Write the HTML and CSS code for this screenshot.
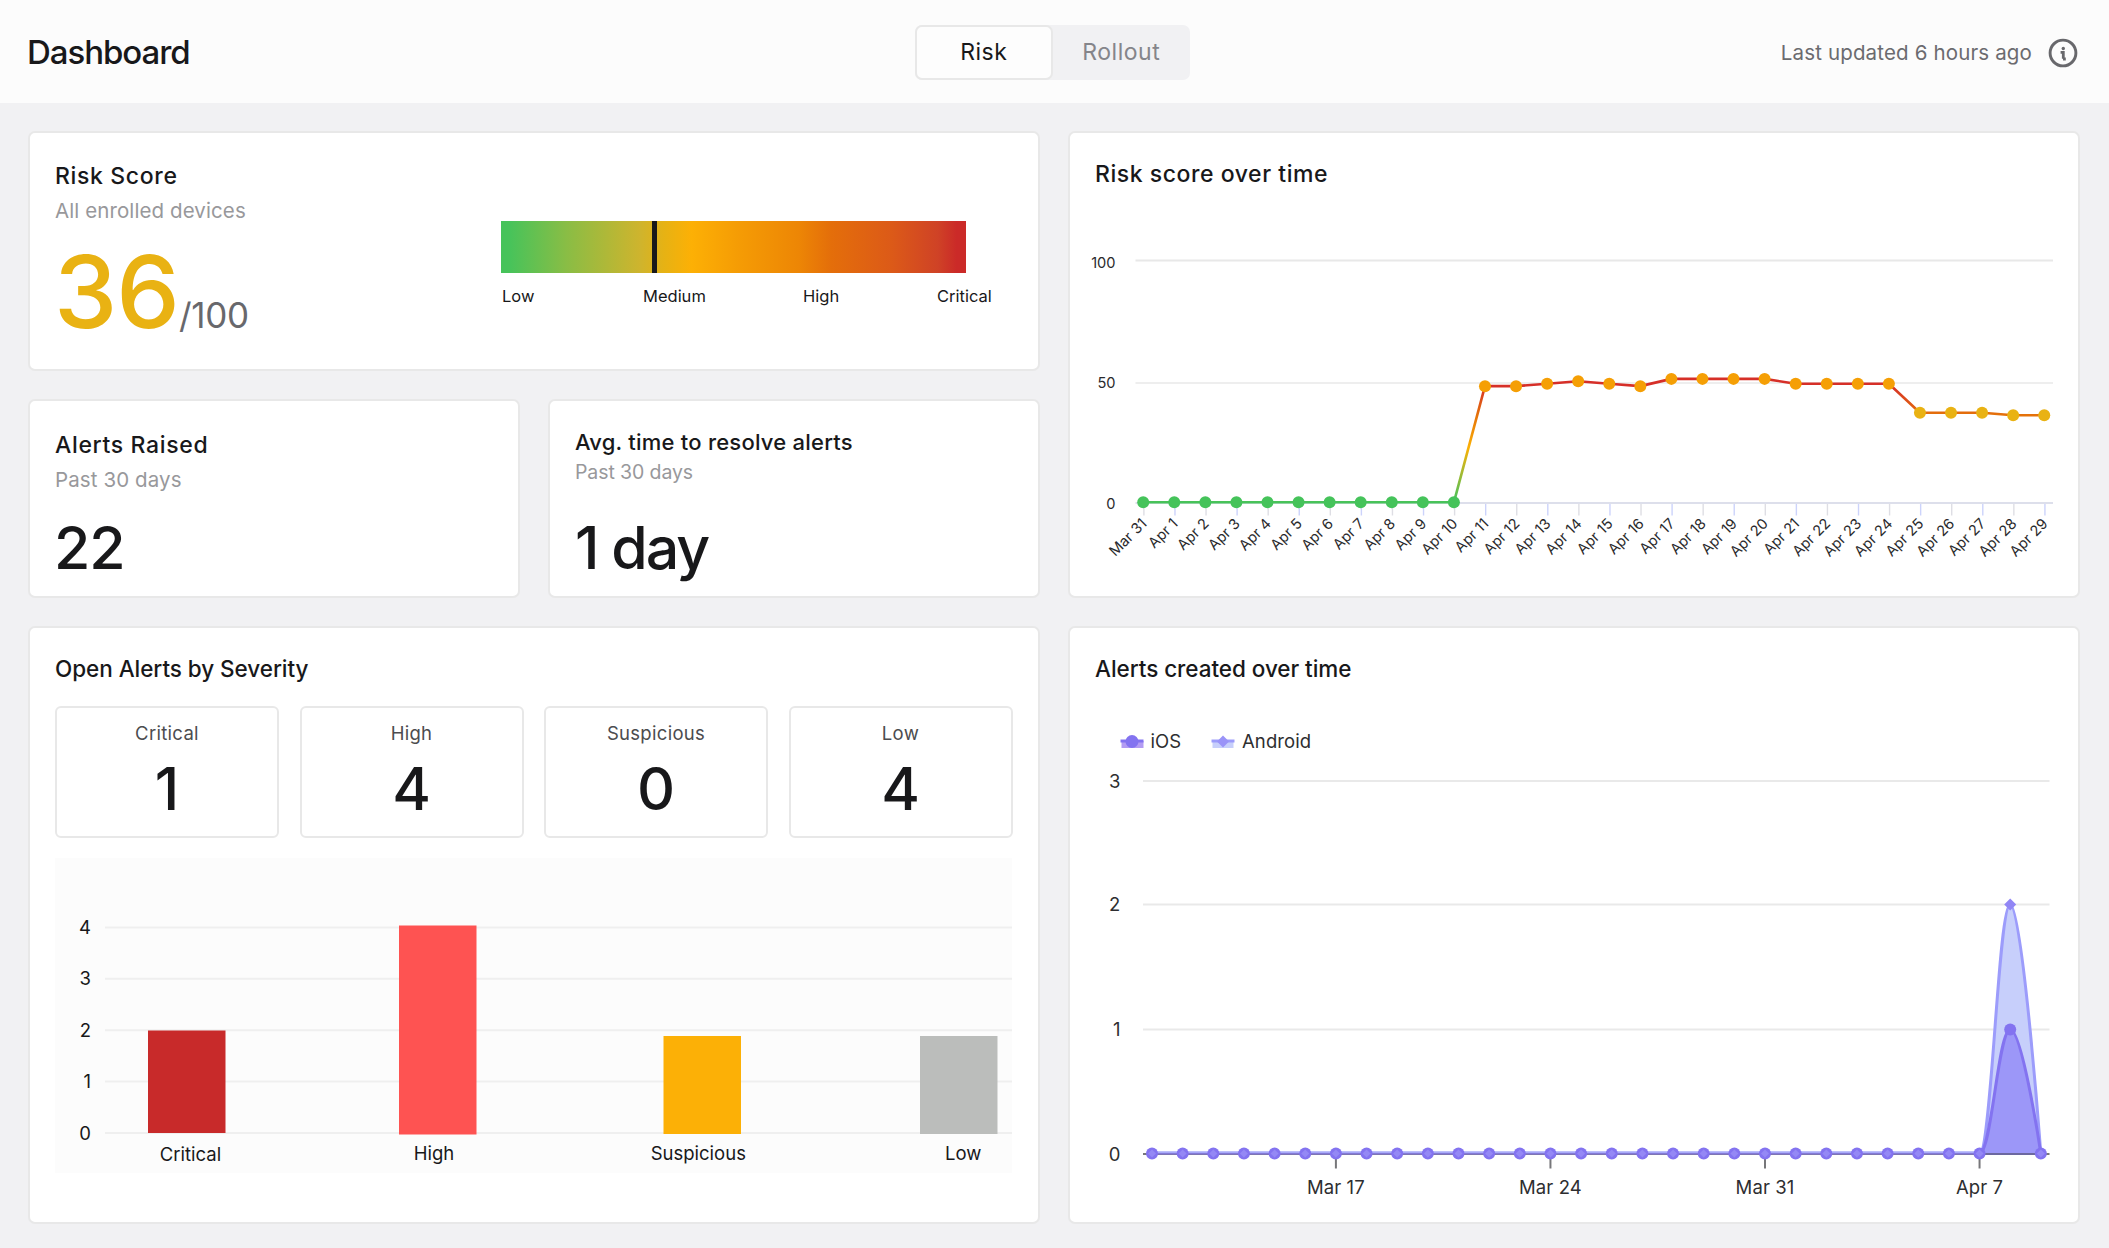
FILE: index.html
```html
<!DOCTYPE html>
<html lang="en">
<head>
    <meta charset="UTF-8">
    <meta name="viewport" content="width=device-width, initial-scale=1.0">
    <title>Dashboard</title>
    <link rel="stylesheet" href="styles.css">
</head>
<body>
    <header class="header">
        <h1 class="page-title">Dashboard</h1>
        <div class="tabs">
            <button class="tab active">Risk</button>
            <button class="tab">Rollout</button>
        </div>
        <div class="updated">
            <span>Last updated 6 hours ago</span>
            <svg class="info-icon" width="30" height="30" viewBox="0 0 30 30">
                <circle cx="15" cy="15" r="12.9" fill="none" stroke="#68686c" stroke-width="2.9"/>
                <circle cx="15.3" cy="10.5" r="1.7" fill="#68686c"/>
                <path d="M12.6 14.4h2.7v6.4M15 21h2.8" fill="none" stroke="#68686c" stroke-width="2.8"/>
            </svg>
        </div>
    </header>

    <main class="dashboard">
        <section class="card score-card">
            <div class="score-info">
                <h2 class="card-title wide">Risk Score</h2>
                <p class="card-sub">All enrolled devices</p>
                <div class="score"><span class="score-value">36</span><span class="score-max">/100</span></div>
            </div>
            <div class="gauge">
                <div class="gauge-bar"><div class="gauge-marker"></div></div>
                <div class="gauge-labels">
                    <span>Low</span>
                    <span>Medium</span>
                    <span>High</span>
                    <span>Critical</span>
                </div>
            </div>
        </section>

        <section class="card risk-time-card">
            <h2 class="card-title">Risk score over time</h2>
            <svg id="riskChart" class="chart" width="1008" height="408"></svg>
        </section>

        <div class="stat-row">
            <section class="card stat-card">
                <h2 class="card-title wide">Alerts Raised</h2>
                <p class="card-sub">Past 30 days</p>
                <div class="stat-value">22</div>
            </section>
            <section class="card stat-card compact">
                <h2 class="card-title">Avg. time to resolve alerts</h2>
                <p class="card-sub">Past 30 days</p>
                <div class="stat-value">1 day</div>
            </section>
        </div>

        <section class="card severity-card">
            <h2 class="card-title">Open Alerts by Severity</h2>
            <div class="severity-list">
                <div class="severity"><span class="severity-name">Critical</span><span class="severity-count">1</span></div>
                <div class="severity"><span class="severity-name">High</span><span class="severity-count">4</span></div>
                <div class="severity"><span class="severity-name">Suspicious</span><span class="severity-count">0</span></div>
                <div class="severity"><span class="severity-name">Low</span><span class="severity-count">4</span></div>
            </div>
            <svg id="severityChart" class="bar-chart" width="957" height="315"></svg>
        </section>

        <section class="card alerts-time-card">
            <h2 class="card-title">Alerts created over time</h2>
            <svg id="alertsChart" class="chart" width="1008" height="536"></svg>
        </section>
    </main>

    <script src="charts.js"></script>
</body>
</html>
```
FILE: styles.css
```css
* {
    box-sizing: border-box;
}

body {
    margin: 0;
    background-color: #f1f1f3;
    color: #18181a;
    font-family: Inter, "Liberation Sans", sans-serif;
    overflow: hidden;
}

h1, h2, p {
    margin: 0;
}

/* Header */
.header {
    display: grid;
    grid-template-columns: 1fr auto 1fr;
    align-items: center;
    height: 103px;
    padding: 0 31px 0 27px;
    background-color: #fcfcfc;
}

.page-title {
    font-size: 33px;
    font-weight: 500;
    letter-spacing: -1.05px;
}

.tabs {
    display: flex;
    height: 55px;
    margin-top: 1px;
    border-radius: 7px;
    background-color: #f1f1f3;
}

.tab {
    width: 137.5px;
    padding: 0;
    border: 2px solid transparent;
    border-radius: 7px;
    background: none;
    color: #85858a;
    font-family: inherit;
    font-size: 23px;
    letter-spacing: 0.5px;
}

.tab.active {
    border-color: #e8e8e8;
    background-color: #fdfdfd;
    color: #18181a;
}

.updated {
    display: flex;
    justify-content: flex-end;
    align-items: center;
    gap: 16px;
    padding-top: 2px;
    color: #6b6b6f;
    font-size: 20.5px;
    letter-spacing: 0.15px;
}

/* Cards */
.dashboard {
    display: grid;
    grid-template-columns: 1012px 1012px;
    grid-template-rows: 240px 199px 598px;
    gap: 28px;
    padding: 28px 0 0 28px;
}

.card {
    padding: 25.5px 25px 0;
    border: 2px solid #e8e8e8;
    border-radius: 7px;
    background-color: #fff;
}

.card-title {
    font-size: 22.5px;
    font-weight: 500;
    line-height: 30px;
    letter-spacing: -0.05px;
}

.card-title.wide {
    font-size: 23px;
    letter-spacing: 0.65px;
}

.card-sub {
    margin-top: 6px;
    color: #98989b;
    font-size: 20.5px;
    line-height: 28px;
    letter-spacing: 0.1px;
}

/* Risk score */
.score-card {
    display: grid;
    grid-template-columns: 446px 1fr;
    padding-top: 27.5px;
}

.score {
    margin-top: 16.5px;
    margin-left: -1px;
    line-height: 100px;
    white-space: nowrap;
}

.score-value {
    color: #e9b213;
    font-size: 101px;
    font-weight: 500;
    letter-spacing: -1px;
}

.score-max {
    color: #68686c;
    font-size: 35px;
    font-weight: 400;
    letter-spacing: -0.3px;
}

.gauge {
    padding-top: 60.5px;
}

.gauge-bar {
    width: 465px;
    height: 52px;
    padding-left: 151px;
    background: linear-gradient(to right, #45c35a 0%, #48c35a 2%, #89bd45 14%, #cfb42d 30%, #e6b214 35%, #fdb005 41%, #f59c05 51%, #ed8605 64%, #e46e0a 71%, #dc5a18 84%, #cf4226 94%, #cb2a28 98%);
}

.gauge-marker {
    width: 5px;
    height: 52px;
    background-color: #18181a;
}

.gauge-labels {
    display: grid;
    grid-template-columns: 141px 160px 134px auto;
    margin-top: 12.5px;
    padding-left: 1px;
    font-size: 16.5px;
    line-height: 20px;
}

/* Stats */
.risk-time-card {
    grid-column: 2;
    grid-row: 1 / 3;
}

.risk-time-card .card-title {
    font-size: 23px;
    letter-spacing: 0.55px;
}

.stat-row {
    display: grid;
    grid-template-columns: 1fr 1fr;
    gap: 28px;
}

.stat-card {
    padding-top: 28.5px;
}

.stat-value {
    margin-top: 24.5px;
    margin-left: -1px;
    font-size: 59px;
    font-weight: 500;
    line-height: 60px;
    letter-spacing: -1px;
}

.stat-card.compact {
    padding-top: 25.5px;
}

.compact .card-title {
    font-size: 22px;
    letter-spacing: 0.22px;
}

.compact .card-sub {
    margin-top: 1px;
    font-size: 19.5px;
    letter-spacing: -0.1px;
}

.compact .stat-value {
    margin-top: 32px;
    margin-left: 0;
    letter-spacing: -2px;
}

/* Severity */
.severity-list {
    display: grid;
    grid-template-columns: repeat(4, 224px);
    gap: 20.5px;
    margin-top: 22px;
}

.severity {
    display: flex;
    flex-direction: column;
    align-items: center;
    height: 132px;
    padding-top: 13px;
    border: 2px solid #e8e8e8;
    border-radius: 6px;
}

.severity-name {
    color: #4c4c4f;
    font-size: 18.5px;
    line-height: 24px;
    letter-spacing: 0.3px;
}

.severity-count {
    margin-top: 14.5px;
    font-size: 59px;
    font-weight: 500;
    line-height: 60px;
}

/* Charts */
.chart {
    display: block;
    margin: 0 -25px;
}

.bar-chart {
    display: block;
    margin-top: 20px;
    background-color: #fcfcfc;
}

svg text {
    fill: #18181a;
    font-size: 18.5px;
}

#riskChart text {
    font-size: 14.6px;
    fill: #2a2a2c;
}

#alertsChart text {
    fill: #2e2e30;
    letter-spacing: 0.1px;
}
```
FILE: charts.js
```javascript
function add(svg, tag, attrs, text) {
    const el = document.createElementNS('http://www.w3.org/2000/svg', tag);
    for (const key in attrs) el.setAttribute(key, attrs[key]);
    if (text !== undefined) el.textContent = text;
    svg.appendChild(el);
    return el;
}

function gridLine(svg, x1, x2, y, color, width) {
    add(svg, 'line', { x1, x2, y1: y, y2: y, stroke: color, 'stroke-width': width });
}

// Risk score over time
function drawRisk() {
    const svg = document.getElementById('riskChart');
    const values = [0, 0, 0, 0, 0, 0, 0, 0, 0, 0, 0, 48, 48, 49, 50, 49, 48, 51, 51, 51, 51, 49, 49, 49, 49, 37, 37, 37, 36, 36];
    const x = i => 73.2 + i * 31.07;
    const y = v => 313.3 - v * 2.42;

    const grad = add(svg, 'linearGradient', { id: 'riskLine', gradientUnits: 'userSpaceOnUse', x1: 0, x2: 0, y1: 314, y2: 191 });
    [[0, '#45c35a'], [0.08, '#5fc052'], [0.45, '#fbb106'], [0.72, '#e4700a'], [0.95, '#d62f28']].forEach(s => {
        add(grad, 'stop', { offset: s[0], 'stop-color': s[1] });
    });

    gridLine(svg, 65.5, 983, 71.5, '#e8e8e8', 2);
    gridLine(svg, 65.5, 983, 194, '#e8e8e8', 1.5);
    gridLine(svg, 65.5, 983, 314, '#d2d4e4', 1.6);
    add(svg, 'text', { x: 45.5, y: 78.8, 'text-anchor': 'end' }, '100');
    add(svg, 'text', { x: 45.5, y: 198.8, 'text-anchor': 'end' }, '50');
    add(svg, 'text', { x: 45.5, y: 320, 'text-anchor': 'end' }, '0');

    values.forEach((v, i) => {
        add(svg, 'line', { x1: x(i) + 0.7, x2: x(i) + 0.7, y1: 315, y2: 326.5, stroke: i % 2 ? '#ccd3fb' : '#dedee4', 'stroke-width': 1.4 });
        const tx = x(i) + 4.5;
        add(svg, 'text', { x: tx, y: 335.5, 'text-anchor': 'end', transform: `rotate(-45 ${tx} 335.5)` }, i === 0 ? 'Mar 31' : 'Apr ' + i);
    });

    add(svg, 'polyline', {
        points: values.map((v, i) => x(i) + ',' + y(v)).join(' '),
        fill: 'none', stroke: 'url(#riskLine)', 'stroke-width': 2.6, 'stroke-linejoin': 'round'
    });
    values.forEach((v, i) => {
        const color = v === 0 ? '#45c35a' : v > 40 ? '#f59f05' : '#e9b213';
        add(svg, 'circle', { cx: x(i), cy: y(v), r: 6, fill: color });
    });
}

// Open alerts by severity
function drawSeverity() {
    const svg = document.getElementById('severityChart');
    for (let v = 0; v <= 4; v++) {
        const y = 275 - v * 51.4;
        gridLine(svg, 50, 957, y, '#efefef', 2);
        add(svg, 'text', { x: 36, y: y + 6.5, 'text-anchor': 'end' }, v);
    }
    const bars = [
        { name: 'Critical', x: 93, top: 172.5, bottom: 275, color: '#c82a2a', label: 135.5, base: 303 },
        { name: 'High', x: 344, top: 67.5, bottom: 276.5, color: '#fe5352', label: 379, base: 302.3 },
        { name: 'Suspicious', x: 608.5, top: 178, bottom: 276, color: '#fcb006', label: 643.3, base: 302.3 },
        { name: 'Low', x: 865, top: 178, bottom: 276, color: '#bbbdbb', label: 908.3, base: 302.3 }
    ];
    bars.forEach(b => {
        add(svg, 'rect', { x: b.x, y: b.top, width: 77.5, height: b.bottom - b.top, fill: b.color });
        add(svg, 'text', { x: b.label, y: b.base, 'text-anchor': 'middle' }, b.name);
    });
}

// Alerts created over time
function drawAlerts() {
    const svg = document.getElementById('alertsChart');
    const x = i => 82 + i * 30.65;
    const base = 469.5;

    // legend
    add(svg, 'rect', { x: 51.5, y: 57, width: 22, height: 7, fill: '#b39cf3' });
    gridLine(svg, 50.5, 73.5, 57, '#8373f0', 3);
    add(svg, 'circle', { cx: 62, cy: 57.5, r: 6.5, fill: '#8373f0' });
    add(svg, 'text', { x: 80.5, y: 64 }, 'iOS');
    add(svg, 'rect', { x: 142.5, y: 57, width: 21, height: 7, fill: '#c7cffb' });
    gridLine(svg, 141.5, 164.5, 57, '#9c9cfb', 3);
    add(svg, 'path', { d: 'M153 51.5l6 6-6 6-6-6z', fill: '#9a93f8' });
    add(svg, 'text', { x: 172, y: 64 }, 'Android');

    [470, 345.5, 220.5, 97].forEach((y, v) => {
        gridLine(svg, 73, 979.5, y, v === 0 ? '#77777a' : '#e9e9e9', 2);
        add(svg, 'text', { x: 50.5, y: y + 6.5, 'text-anchor': 'end' }, v);
    });
    [[6, 'Mar 17'], [13, 'Mar 24'], [20, 'Mar 31'], [27, 'Apr 7']].forEach(t => {
        add(svg, 'line', { x1: x(t[0]), x2: x(t[0]), y1: 470, y2: 484.5, stroke: '#77777a', 'stroke-width': 2 });
        add(svg, 'text', { x: x(t[0]), y: 510, 'text-anchor': 'middle' }, t[1]);
    });

    // both series stay at zero until the peak on Apr 8
    const curve = top => `M${x(27)} ${base}C${x(27) + 12} ${base} ${x(28) - 12} ${top} ${x(28)} ${top}C${x(28) + 12} ${top} ${x(29)} ${base} ${x(29)} ${base}`;
    [[220.5, '#c7cffb', '#9c9cfb'], [345.5, '#9c97f8', '#8373f0']].forEach(s => {
        add(svg, 'path', { d: curve(s[0]) + 'Z', fill: s[1] });
        add(svg, 'path', { d: curve(s[0]), fill: 'none', stroke: s[2], 'stroke-width': 3 });
    });
    gridLine(svg, x(0), x(27), base - 1.2, '#a9abf9', 2);
    gridLine(svg, x(0), x(27), base + 0.3, '#8577ec', 1.2);
    gridLine(svg, x(27), x(29), 470, '#6c68a0', 2);
    add(svg, 'path', { d: `M${x(28)} 214.5l6 6-6 6-6-6z`, fill: '#9186f5' });
    add(svg, 'circle', { cx: x(28), cy: 345.5, r: 6, fill: '#8373f0' });
    for (let i = 0; i < 30; i++) {
        if (i === 28) continue;
        add(svg, 'circle', { cx: x(i), cy: base, r: 6, fill: '#8373f0' });
        add(svg, 'path', { d: `M${x(i)} ${base - 4}l4 4-4 4-4-4z`, fill: '#9488f5' });
    }
}

drawRisk();
drawSeverity();
drawAlerts();
```
